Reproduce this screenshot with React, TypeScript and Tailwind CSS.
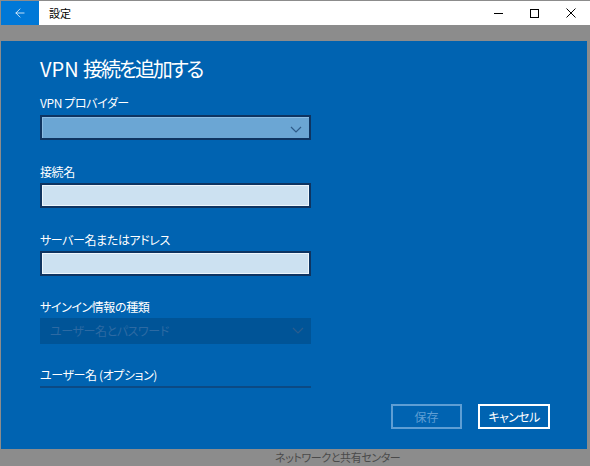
import { ArrowLeft } from 'lucide-react'

const font = { fontFamily: '"Noto Sans CJK JP", "Noto Sans", sans-serif' }

function Chevron({ color }: { color: string }) {
  return (
    <svg width="12" height="7" viewBox="0 0 12 7" className="absolute right-[7px] top-[9px]">
      <path d="M1 1 L6 6 L11 1" fill="none" stroke={color} strokeWidth="1.2" />
    </svg>
  )
}

function Label({ children, mt }: { children: string; mt: string }) {
  return <div className={`text-[12px] leading-[16px] text-white tracking-[-0.4px] ${mt}`}>{children}</div>
}

export default function App() {
  return (
    <div
      className="w-[590px] h-[466px] bg-[#8c8c8c] pt-px pl-px flex flex-col overflow-hidden [font-feature-settings:'palt']"
      style={font}
    >
      {/* title bar */}
      <div className="h-[24px] bg-white flex items-center shrink-0">
        <div className="w-[38px] h-full bg-[#0078d7] flex items-center justify-center">
          <ArrowLeft size={14} strokeWidth={1.3} color="white" />
        </div>
        <span className="ml-[10px] text-[11px] text-black">設定</span>
        <div className="ml-auto flex items-center h-full">
          <div className="w-[36px] flex justify-center">
            <div className="w-[9px] h-px bg-black" />
          </div>
          <div className="w-[36px] flex justify-center">
            <div className="w-[9px] h-[9px] border border-black" />
          </div>
          <div className="w-[38px] flex justify-center">
            <svg width="10" height="10" viewBox="0 0 10 10">
              <path d="M0.5 0.5 L9.5 9.5 M9.5 0.5 L0.5 9.5" stroke="black" strokeWidth="1" />
            </svg>
          </div>
        </div>
      </div>

      <div className="h-[16px] shrink-0" />

      {/* blue dialog */}
      <div className="h-[408px] w-[586px] bg-[#0063b1] flex flex-col shrink-0">
        <div className="h-[347px] overflow-hidden pl-[39px]">
          <div className="mt-[14px] text-[20px] leading-[28px] text-white">
            VPN <span className="tracking-[-2.2px]">接続を追加する</span>
          </div>

          <Label mt="mt-[12px]">VPN プロバイダー</Label>
          <div className="relative mt-[4px] w-[271px] h-[25px] bg-[#6ba6d4] border-2 border-[#0e3461] shadow-[inset_1px_1px_0_#8dbde3]">
            <Chevron color="#2f5b88" />
          </div>

          <Label mt="mt-[24px]">接続名</Label>
          <div className="mt-[3px] w-[271px] h-[25px] bg-[#cce1f1] border-2 border-[#0e3461] shadow-[inset_0_0_0_1px_#eef6fc]" />

          <Label mt="mt-[24px]">サーバー名またはアドレス</Label>
          <div className="mt-[3px] w-[271px] h-[25px] bg-[#cce1f1] border-2 border-[#0e3461] shadow-[inset_0_0_0_1px_#eef6fc]" />

          <Label mt="mt-[23px]">サインイン情報の種類</Label>
          <div className="relative mt-[3px] w-[271px] h-[26px] bg-[#005497] flex items-center pl-[10px]">
            <span className="text-[12px] tracking-[-0.4px] text-[#2d6aa3]">ユーザー名とパスワード</span>
            <Chevron color="#2a5d8f" />
          </div>

          <Label mt="mt-[23px]">ユーザー名 (オプション)</Label>
          <div className="mt-[3px] w-[271px] h-[25px] border-t-2 border-[#0b4a85]" />
        </div>

        <div className="flex-1 flex justify-end items-start pt-[16px] pr-[37px] gap-[16px]">
          <button className="w-[71px] h-[25px] border-2 border-[#5e9ed4] text-[12px] text-[#5e9ed4] flex items-center justify-center">
            保存
          </button>
          <button className="w-[72px] h-[25px] border-2 border-white text-[12px] tracking-[-0.6px] text-white flex items-center justify-center">
            キャンセル
          </button>
        </div>
      </div>

      {/* content behind the dialog */}
      <div className="pl-[274px] pt-[1px] text-[11px] leading-[14px] tracking-[-0.4px] text-[#4a4a4a]">
        ネットワークと共有センター
      </div>
    </div>
  )
}
